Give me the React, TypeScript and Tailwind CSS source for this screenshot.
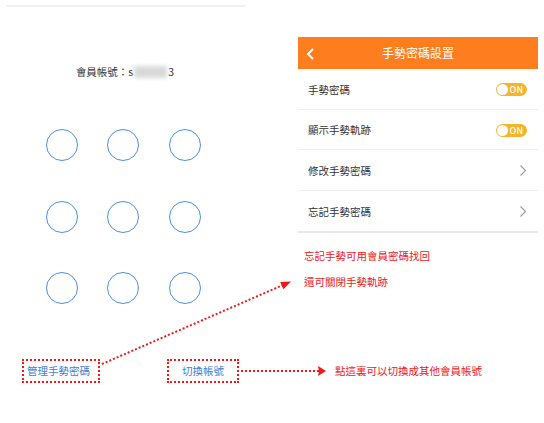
const font = { fontFamily: '"Noto Sans CJK TC", "Noto Sans", sans-serif' };

const Toggle = () => (
    <div className="relative w-[31px] h-[13px] rounded-full bg-[#f6b42a] flex items-center justify-end pr-[4px]">
        <div className="absolute left-[1px] top-[1px] w-[11px] h-[11px] rounded-full bg-white" />
        <span className="text-[9px] leading-none text-white font-medium">ON</span>
    </div>
);

const Chevron = () => (
    <svg width="6" height="11" viewBox="0 0 6 11" className="mr-[1px]">
        <polyline points="0.5,0.5 5.5,5.5 0.5,10.5" fill="none" stroke="#999" strokeWidth="1.1" />
    </svg>
);

const rows: { label: string; kind: "toggle" | "link" }[] = [
    { label: "手勢密碼", kind: "toggle" },
    { label: "顯示手勢軌跡", kind: "toggle" },
    { label: "修改手勢密碼", kind: "link" },
    { label: "忘記手勢密碼", kind: "link" },
];

export default function App() {
    return (
        <div className="relative w-[544px] h-[423px] bg-white overflow-hidden flex" style={font}>
            {/* left: phone lock screen */}
            <div className="w-[248px] flex flex-col items-center pt-[5px]">
                <div className="self-start ml-[6px] w-[239px] h-[2px] bg-[#f0f0f0]" />
                <div className="mt-[57px] h-[16px] flex items-center text-[10.5px] text-[#333] pl-[2px]">
                    <span>會員帳號：s</span>
                    <span className="inline-block w-[33px] h-[12px] bg-[#d9d9d9] blur-[2px] mx-[1px]" />
                    <span>3</span>
                </div>
                <div className="mt-[49px] -ml-[2px] grid grid-cols-3 gap-x-[29.5px] gap-y-[39.5px]">
                    {Array.from({ length: 9 }).map((_, i) => (
                        <div key={i} className="w-[32px] h-[32px] rounded-full border-[1.5px] border-[#4a90e2]" />
                    ))}
                </div>
                <div className="mt-[55px] self-start pl-[22px] flex gap-[67px]">
                    <div className="w-[78px] h-[24px] border-2 border-dotted border-[#f01818] flex items-center pl-[3px] text-[10.5px] text-[#3b7fd4]">
                        管理手勢密碼
                    </div>
                    <div className="w-[72px] h-[24px] border-2 border-dotted border-[#f01818] flex items-center justify-center text-[10.5px] text-[#3b7fd4]">
                        切換帳號
                    </div>
                </div>
            </div>

            {/* right: settings screen */}
            <div className="ml-[50px] w-[240px] pt-[37px] flex flex-col">
                <div className="relative h-[32px] bg-[#fd7d1f] flex items-center justify-center text-white text-[12px]">
                    <svg width="9" height="12" viewBox="0 0 9 12" className="absolute left-[8px] top-[11px]">
                        <polyline points="7,1 2,6 7,11" fill="none" stroke="#fff" strokeWidth="2" />
                    </svg>
                    手勢密碼設置
                </div>
                {rows.map((r, i) => (
                    <div
                        key={r.label}
                        className={`h-[40.5px] flex items-center justify-between pl-[10px] pr-[11px] pt-[2px] text-[10.5px] text-[#333] ${i < rows.length - 1 ? "border-b border-[#efefef]" : ""}`}>
                        <span>{r.label}</span>
                        {r.kind === "toggle" ? <Toggle /> : <Chevron />}
                    </div>
                ))}
                <div className="h-[2px] bg-[#e8e8e8]" />
                <div className="mt-[16px] pl-[6px] h-[14px] leading-[14px] text-[10.5px] text-[#f01818]">忘記手勢可用會員密碼找回</div>
                <div className="mt-[12px] pl-[6px] h-[14px] leading-[14px] text-[10.5px] text-[#f01818]">還可關閉手勢軌跡</div>
                <div className="mt-[75px] pl-[37px] h-[14px] leading-[14px] text-[10.5px] text-[#f01818] whitespace-nowrap">
                    點這裏可以切換成其他會員帳號
                </div>
            </div>

            {/* annotation arrows */}
            <svg className="absolute inset-0 pointer-events-none" width="544" height="423">
                <line x1="102" y1="364" x2="283" y2="285" stroke="#f01818" strokeWidth="2" strokeDasharray="2 2" />
                <polygon points="291,281.5 283.4,289.3 280.2,281.9" fill="#f01818" />
                <line x1="241" y1="371" x2="319" y2="371" stroke="#f01818" strokeWidth="2" strokeDasharray="2 2" />
                <polygon points="326,371 318,366 319,371 318,376" fill="#f01818" />
            </svg>
        </div>
    );
}
